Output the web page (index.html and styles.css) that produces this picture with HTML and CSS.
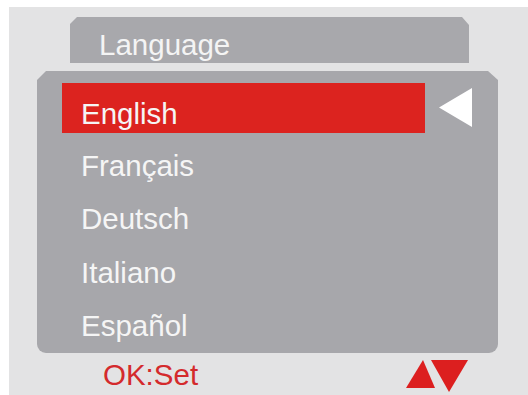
FILE: index.html
```html
<!DOCTYPE html>
<html>
<head>
<meta charset="utf-8">
<link rel="stylesheet" href="styles.css">
</head>
<body>
<div class="screen">
  <div class="tab">Language</div>
  <div class="panel">
    <div class="row">
      <div class="item selected">English</div>
      <svg class="pointer" width="34" height="40" viewBox="0 0 34 40"><polygon points="0,19.5 33,0 33,39" fill="#ffffff"/></svg>
    </div>
    <div class="row"><div class="item">Français</div></div>
    <div class="row"><div class="item">Deutsch</div></div>
    <div class="row"><div class="item">Italiano</div></div>
    <div class="row"><div class="item">Español</div></div>
  </div>
  <div class="footer">
    <span class="hint">OK:Set</span>
    <svg class="arrows" width="63" height="33" viewBox="0 0 63 33">
      <polygon points="0,28 17,0 29,28" fill="#dc1f1f"/>
      <polygon points="25,0 62,0 43,32" fill="#dc1f1f"/>
    </svg>
  </div>
</div>
</body>
</html>
```

FILE: styles.css
```css
html, body {
  margin: 0;
  padding: 0;
  background: #ffffff;
}
body {
  width: 528px;
  height: 395px;
  overflow: hidden;
  font-family: "Liberation Sans", Arial, sans-serif;
}
.screen {
  margin-left: 9px;
  margin-top: 7px;
  width: 519px;
  height: 388px;
  background: #e3e3e4;
  display: flex;
  flex-direction: column;
  overflow: hidden;
}
.tab {
  box-sizing: border-box;
  margin-left: 61px;
  margin-top: 10px;
  width: 399px;
  height: 46px;
  padding-left: 29px;
  padding-top: 5px;
  line-height: 46px;
  font-size: 29.5px;
  color: #f4f4f4;
  background: #a8a8ac;
  clip-path: polygon(7px 0, calc(100% - 7px) 0, 100% 8px, 100% 100%, 0 100%, 0 7px);
}
.panel {
  box-sizing: border-box;
  margin-left: 28px;
  margin-top: 8px;
  width: 461px;
  height: 282px;
  padding-left: 25px;
  padding-top: 12px;
  background: #a7a7ab;
  border-radius: 0 0 9px 9px;
  clip-path: polygon(9px 0, calc(100% - 10px) 0, 100% 9px, 100% 100%, 0 100%, 0 9px);
  display: flex;
  flex-direction: column;
  gap: 3.5px;
}
.row {
  display: flex;
  align-items: center;
}
.item {
  box-sizing: border-box;
  width: 363px;
  height: 50px;
  padding-left: 19px;
  padding-top: 4px;
  line-height: 50px;
  font-size: 29.5px;
  color: #f5f5f5;
  white-space: nowrap;
}
.item.selected {
  background: #dc231f;
  line-height: 46px;
  padding-top: 8px;
}
.pointer {
  margin-left: 14px;
  flex: none;
}
.footer {
  margin-left: 28px;
  width: 461px;
  display: flex;
  align-items: flex-start;
}
.hint {
  margin-left: 66px;
  margin-top: 4px;
  line-height: 36px;
  font-size: 29.5px;
  color: #d42a2c;
}
.arrows {
  margin-left: auto;
  margin-right: 29px;
  margin-top: 7px;
  flex: none;
}
```
